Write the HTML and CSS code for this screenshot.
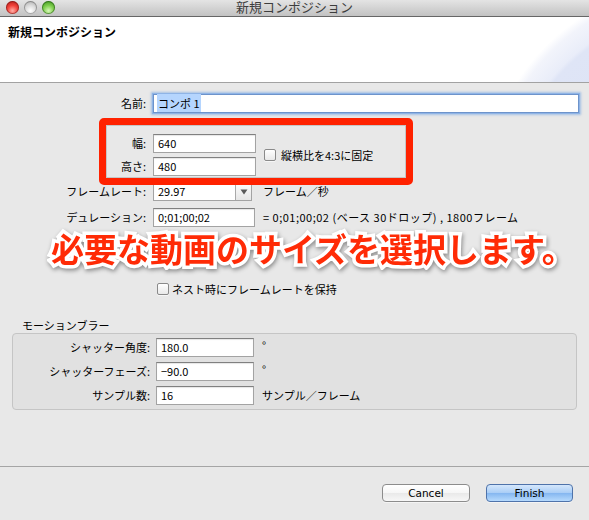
FILE: index.html
```html
<!DOCTYPE html>
<html lang="ja">
<head>
<meta charset="utf-8">
<title>新規コンポジション</title>
<link rel="stylesheet" href="styles.css">
</head>
<body>
<div class="window">
  <div class="titlebar">
    <div class="lights">
      <span class="light light-red"></span>
      <span class="light light-gray"></span>
      <span class="light light-green"></span>
    </div>
    <div class="title">新規コンポジション</div>
    <div></div>
  </div>

  <div class="header">
    <div class="header-title">新規コンポジション</div>
  </div>

  <div class="content">
    <div class="row">
      <span class="lbl">名前:</span>
      <div class="field field-name"><span class="sel">コンポ 1</span></div>
    </div>

    <div class="size-block">
      <div class="size-rows">
        <div class="row">
          <span class="lbl">幅:</span>
          <div class="field w-size">640</div>
        </div>
        <div class="row">
          <span class="lbl">高さ:</span>
          <div class="field w-size">480</div>
        </div>
      </div>
      <div class="check-item check-aspect">
        <span class="checkbox"></span>
        <span>縦横比を4:3に固定</span>
      </div>
      <div class="red-frame"></div>
    </div>

    <div class="row row-rate">
      <span class="lbl">フレームレート:</span>
      <div class="field combo">
        <span class="combo-text">29.97</span>
        <span class="combo-btn">
          <svg width="8" height="6" viewBox="0 0 8 6"><path d="M0.5 0.5 L7.5 0.5 L4 5.5 Z" fill="#5a5a5a"/></svg>
        </span>
      </div>
      <span class="unit unit-rate">フレーム／秒</span>
    </div>

    <div class="row row-duration">
      <span class="lbl">デュレーション:</span>
      <div class="field w-duration">0;01;00;02</div>
      <span class="unit unit-duration">= 0;01;00;02 (ベース 30ドロップ) , 1800フレーム</span>
    </div>

    <div class="check-item check-nest">
      <span class="checkbox"></span>
      <span>ネスト時にフレームレートを保持</span>
    </div>

    <div class="group-label">モーションブラー</div>
    <div class="group">
      <div class="row">
        <span class="lbl lbl-group">シャッター角度:</span>
        <div class="field w-group">180.0</div>
        <span class="unit unit-group unit-deg">°</span>
      </div>
      <div class="row">
        <span class="lbl lbl-group">シャッターフェーズ:</span>
        <div class="field w-group">−90.0</div>
        <span class="unit unit-group unit-deg">°</span>
      </div>
      <div class="row">
        <span class="lbl lbl-group">サンプル数:</span>
        <div class="field w-group">16</div>
        <span class="unit unit-group">サンプル／フレーム</span>
      </div>
    </div>

    <div class="callout">必要な動画のサイズを選択します。</div>
  </div>

  <div class="footer">
    <button class="btn btn-cancel">Cancel</button>
    <button class="btn btn-finish">Finish</button>
  </div>
</div>
</body>
</html>
```

FILE: styles.css
```css
* { box-sizing: border-box; }

html, body {
  margin: 0;
  padding: 0;
}

body {
  background: #e8e8e8;
  font-family: "Noto Sans CJK JP", "Noto Sans", sans-serif;
  font-size: 11px;
  color: #000;
}

.window {
  width: 589px;
  height: 520px;
  overflow: hidden;
  background: #e8e8e8;
}

/* ---------- title bar ---------- */
.titlebar {
  height: 17px;
  border-bottom: 1px solid #666;
  background: linear-gradient(#e4e4e4, #c2c2c2);
  display: grid;
  grid-template-columns: 1fr auto 1fr;
  align-items: start;
}

.lights {
  display: flex;
  gap: 5px;
  padding: 1px 0 0 6px;
}

.light {
  width: 13px;
  height: 13px;
  border-radius: 50%;
}

.light-red {
  background: radial-gradient(circle at 50% 75%, #ffb1a8 0, #f2433b 45%, #c02520 80%, #9a1a16 100%);
  box-shadow: inset 0 0 0 1px rgba(110, 20, 20, 0.55);
}

.light-gray {
  background: radial-gradient(circle at 50% 75%, #ffffff 0, #dcdcdc 45%, #b2b2b2 85%, #8f8f8f 100%);
  box-shadow: inset 0 0 0 1px rgba(80, 80, 80, 0.45);
}

.light-green {
  background: radial-gradient(circle at 50% 75%, #d8f7b8 0, #7fcf4e 45%, #4a9e26 82%, #347a18 100%);
  box-shadow: inset 0 0 0 1px rgba(30, 80, 15, 0.55);
}

.title {
  font-family: "Liberation Sans", "Noto Sans CJK JP", sans-serif;
  font-size: 13px;
  line-height: 15px;
  color: #3d3d3d;
  white-space: nowrap;
}

/* ---------- header ---------- */
.header {
  height: 66px;
  border-bottom: 1px solid #a2a2a2;
  background:
    radial-gradient(circle at 700px 183px,
      #d9e0f4 0,
      #dfe5f6 188px,
      #e9edf9 192px,
      #f2f4fb 210px,
      rgba(255, 255, 255, 0) 218px),
    #ffffff;
  padding: 7px 0 0 8px;
}

.header-title {
  font-size: 12px;
  font-weight: 700;
  line-height: 15px;
}

/* ---------- content ---------- */
.content {
  height: 383px;
  position: relative;
  padding-top: 11px;
}

.row {
  display: flex;
  align-items: center;
  height: 19px;
}

.lbl {
  width: 146px;
  margin-right: 7px;
  text-align: right;
  line-height: 19px;
  white-space: nowrap;
}

.field {
  height: 19px;
  background: #fff;
  border: 1px solid #a3a3a3;
  border-top-color: #808080;
  box-shadow: inset 0 1px 1px rgba(0, 0, 0, 0.1);
  padding-left: 4px;
  line-height: 17px;
  white-space: nowrap;
}

.field-name {
  width: 426px;
  padding-left: 3px;
  border-color: #6d93cb;
  box-shadow: 0 0 0 1px #8fb4e6, 0 0 2px 2px rgba(110, 160, 225, 0.55);
}

.sel {
  background: #b5d5fe;
  padding: 1px 1px 1px 1px;
}

.size-block {
  position: relative;
  display: flex;
  margin-top: 21px;
}

.size-rows {
  display: flex;
  flex-direction: column;
  gap: 4px;
}

.w-size { width: 103px; }

.check-item {
  display: flex;
  align-items: center;
  gap: 5px;
  white-space: nowrap;
}

.check-aspect {
  margin-left: 8px;
}

.checkbox {
  width: 12px;
  height: 12px;
  border: 1px solid #8a8a8a;
  border-radius: 2px;
  background: linear-gradient(#ffffff, #e9e9e9);
  box-shadow: 0 1px 0 rgba(255, 255, 255, 0.6);
  flex: none;
}

.red-frame {
  position: absolute;
  left: 99px;
  top: -16px;
  width: 314px;
  height: 67px;
  border: 7px solid #ff2200;
  border-radius: 5px;
  box-shadow: inset 0 0 0 1px #c6c6c6;
}

.row-rate { margin-top: 6px; }

.combo {
  width: 99px;
  display: flex;
  padding-left: 0;
}

.combo-text {
  flex: 1;
  padding-left: 4px;
}

.combo-btn {
  width: 16px;
  border-left: 1px solid #a9a9a9;
  background: linear-gradient(#fdfdfd, #e6e6e6);
  display: flex;
  align-items: center;
  justify-content: center;
}

.unit { white-space: nowrap; line-height: 19px; }
.unit-rate { margin-left: 11px; }

.row-duration { margin-top: 7px; }
.w-duration { width: 102px; }
.unit-duration { margin-left: 8px; letter-spacing: 0.5px; }

.check-nest {
  margin-top: 56px;
  padding-left: 157px;
  height: 12px;
  gap: 3px;
}

.group-label {
  margin-top: 23px;
  padding-left: 22px;
  line-height: 14px;
  height: 14px;
}

.group {
  margin: 1px 12px 0;
  border: 1px solid #c5c5c5;
  border-radius: 4px;
  background: #e1e1e1;
  padding: 4px 0 4px 0;
  display: flex;
  flex-direction: column;
  gap: 5px;
}

.lbl-group {
  width: 137px;
  margin-right: 6px;
}

.w-group { width: 98px; }
.unit-group { margin-left: 8px; }
.unit-deg { line-height: 15px; align-self: flex-start; }

/* ---------- overlay caption ---------- */
.callout {
  position: absolute;
  left: 51px;
  top: 151px;
  font-family: "Liberation Sans", "Noto Sans CJK JP", sans-serif;
  font-size: 33px;
  line-height: 33px;
  font-weight: 700;
  color: #ff2b06;
  white-space: nowrap;
  -webkit-text-stroke: 7px #ffffff;
  paint-order: stroke fill;
  filter: drop-shadow(1px 2px 2px rgba(0, 0, 0, 0.4));
}

/* ---------- footer ---------- */
.footer {
  height: 54px;
  border-top: 1px solid #a5a5a5;
  display: flex;
  justify-content: flex-end;
  align-items: flex-start;
  gap: 16px;
  padding: 17px 16px 0 0;
}

.btn {
  height: 18px;
  border-radius: 4px;
  font-family: "DejaVu Sans", "Noto Sans", sans-serif;
  font-size: 10.5px;
  line-height: 16px;
  color: #000;
  padding: 0;
  margin: 0;
}

.btn-cancel {
  width: 88px;
  border: 1px solid #8c8c8c;
  background: linear-gradient(#ffffff 0, #f6f6f6 50%, #e9e9e9 51%, #f7f7f7 100%);
  box-shadow: 0 1px 0 rgba(255, 255, 255, 0.5);
}

.btn-finish {
  width: 87px;
  border: 1px solid #4f73aa;
  background: linear-gradient(#d5e7fc 0, #a9cdf6 50%, #84b6f0 51%, #b6dafd 100%);
  box-shadow: 0 1px 0 rgba(255, 255, 255, 0.5);
}
```
